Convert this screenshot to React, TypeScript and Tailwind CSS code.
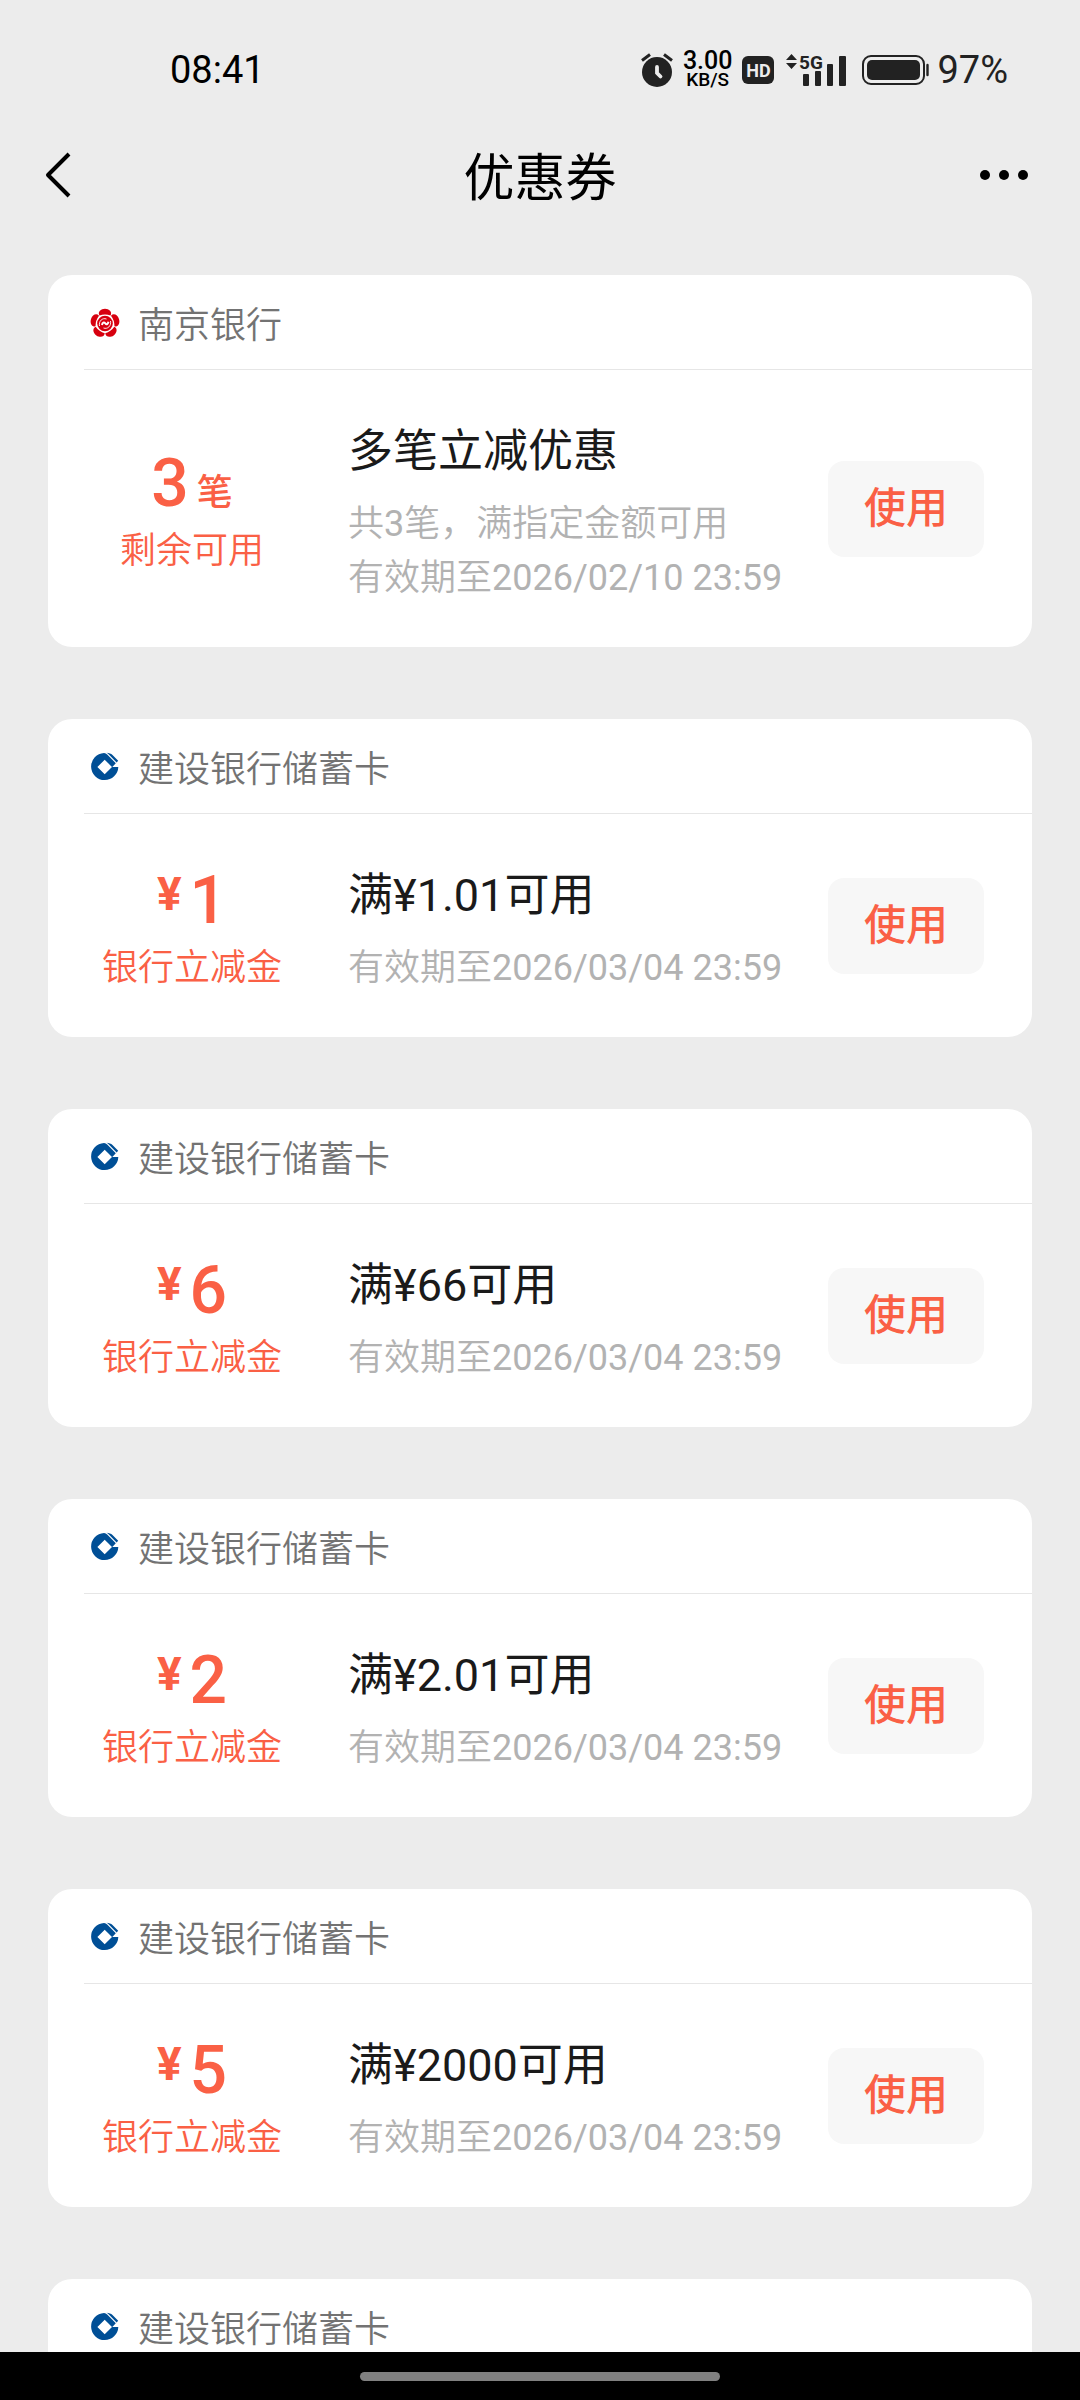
type Bank = "nanjing" | "ccb";

interface Coupon {
  id: number;
  bank: Bank;
  bankName: string;
  currency?: string;
  amount: string;
  unit?: string;
  label: string;
  title: string;
  lines: string[];
}

const coupons: Coupon[] = [
  {
    id: 1,
    bank: "nanjing",
    bankName: "南京银行",
    amount: "3",
    unit: "笔",
    label: "剩余可用",
    title: "多笔立减优惠",
    lines: ["共3笔，满指定金额可用", "有效期至2026/02/10 23:59"],
  },
  {
    id: 2,
    bank: "ccb",
    bankName: "建设银行储蓄卡",
    currency: "¥",
    amount: "1",
    label: "银行立减金",
    title: "满¥1.01可用",
    lines: ["有效期至2026/03/04 23:59"],
  },
  {
    id: 3,
    bank: "ccb",
    bankName: "建设银行储蓄卡",
    currency: "¥",
    amount: "6",
    label: "银行立减金",
    title: "满¥66可用",
    lines: ["有效期至2026/03/04 23:59"],
  },
  {
    id: 4,
    bank: "ccb",
    bankName: "建设银行储蓄卡",
    currency: "¥",
    amount: "2",
    label: "银行立减金",
    title: "满¥2.01可用",
    lines: ["有效期至2026/03/04 23:59"],
  },
  {
    id: 5,
    bank: "ccb",
    bankName: "建设银行储蓄卡",
    currency: "¥",
    amount: "5",
    label: "银行立减金",
    title: "满¥2000可用",
    lines: ["有效期至2026/03/04 23:59"],
  },
];

const AlarmIcon = () => (
  <svg width="32" height="36" viewBox="0 0 32 36" fill="none">
    <circle cx="16" cy="20" r="15" fill="#222" />
    <path d="M1 8.500 9 2.500M31 8.500 23 2.500" stroke="#222" strokeWidth="3" />
    <path d="M16 15v6l3.500 3.500" stroke="#ececec" strokeWidth="3.800" strokeLinecap="round" />
  </svg>
);

const SignalIcon = () => (
  <svg width="60" height="34" viewBox="0 0 60 34" fill="#222" className="overflow-visible">
    <path d="M0 7 5.5 1 11 7zM0 10 5.5 16 11 10z" />
    <text x="13" y="16" fontSize="19" fontWeight="700">5G</text>
    <rect x="17" y="21" width="6" height="12" rx="1" />
    <rect x="29" y="18" width="6" height="15" rx="1" />
    <rect x="41" y="11" width="6" height="22" rx="1" />
    <rect x="53" y="3" width="7" height="30" rx="1" />
  </svg>
);

const BatteryIcon = () => (
  <svg width="67" height="30" viewBox="0 0 67 30" fill="none">
    <rect x="1" y="1" width="61" height="28" rx="8" stroke="#222" strokeWidth="2" />
    <rect x="5" y="5" width="53" height="20" rx="5" fill="#222" />
    <path d="M65.5 10v10" stroke="#222" strokeWidth="2.4" strokeLinecap="round" />
  </svg>
);

const NanjingLogo = () => (
  <svg width="30" height="30" viewBox="0 0 30 30" fill="none">
    {[0, 72, 144, 216, 288].map((angle) => (
      <path
        key={angle}
        transform={`rotate(${angle} 15 15.5)`}
        d="M9.4 7.4C7.4 3.8 11 .8 15 .8s7.6 3 5.6 6.600Q15 5.400 9.400 7.400z"
        fill="#d7000f"
      />
    ))}
    <circle cx="15" cy="15.5" r="7.8" fill="#d7000f" />
    <path d="M9.500 18c-1-5 3-8.500 7-7M20.500 13c1 5-3 8.500-7 7" stroke="#fff" strokeWidth="0.9" />
    <path d="M12 17c.5-2.500 2-3.200 3.300-1.600s2.700.6 3.200-1.600" stroke="#fff" strokeWidth="2" />
  </svg>
);

const CcbLogo = () => (
  <svg width="30" height="30" viewBox="0 0 30 30" fill="#004f96">
    <path
      fillRule="evenodd"
      d="M14 .9Q16 1 17.2 2.4L25.8 11.2 22.3 15H28.3A13.6 13.6 0 1 1 14 .9zM14.7 7.700 7.400 15 14.700 22.300 22 15z"
    />
    <path d="M16.5 .8C19 .8 21 1.8 22.5 3L28.2 8.8 26.6 10.4 18.8 2.4Q18 1.4 16.5 .8z" />
  </svg>
);

const StatusBar = () => (
  <div className="flex h-[140px] shrink-0 items-center pr-[72px] pl-[170px] text-[38px] text-[#222]">
    <span className="flex-1 text-black">08:41</span>
    <AlarmIcon />
    <div className="mx-[10px] flex flex-col items-center font-medium text-black">
      <span className="text-[25px] leading-[20px]">3.00</span>
      <span className="text-[19px] leading-[18px]">KB/S</span>
    </div>
    <span className="flex h-7 w-8 items-center justify-center rounded-md bg-[#222] text-[18px] font-bold text-[#ececec]">
      HD
    </span>
    <div className="mr-4 ml-3">
      <SignalIcon />
    </div>
    <BatteryIcon />
    <span className="ml-2">97%</span>
  </div>
);

const NavBar = () => (
  <header className="flex h-[70px] shrink-0 items-center justify-between pr-[52px] pl-11 text-black">
    <button type="button" aria-label="返回" className="w-12">
      <svg width="28" height="48" viewBox="0 0 28 48" fill="none">
        <path d="M25 3 4 24 25 45" stroke="currentColor" strokeWidth="4" strokeLinejoin="round" />
      </svg>
    </button>
    <h1 className="pt-2 pl-2 text-[51px]">优惠券</h1>
    <button type="button" aria-label="更多" className="w-12">
      <svg width="48" height="10" viewBox="0 0 48 10" fill="currentColor">
        <circle cx="5" cy="5" r="5" />
        <circle cx="24" cy="5" r="5" />
        <circle cx="43" cy="5" r="5" />
      </svg>
    </button>
  </header>
);

const CouponHeader = ({ bank, name }: { bank: Bank; name: string }) => (
  <div className="flex h-[95px] items-center gap-[18px] border-b border-[#e6e6e6] pt-[2px] pl-[6px]">
    {bank === "nanjing" ? <NanjingLogo /> : <CcbLogo />}
    <span className="pt-[6px] text-[36px] font-[350] text-[#737373]">{name}</span>
  </div>
);

const CouponCard = ({ coupon }: { coupon: Coupon }) => (
  <article className="shrink-0 rounded-3xl bg-white pl-9">
    <CouponHeader bank={coupon.bank} name={coupon.bankName} />

    <div className="flex items-center py-[42px] pr-12">
      <div className="w-[216px] pt-1 text-center text-[#fa6045]">
        <div className="flex h-20 justify-center gap-2 leading-[80px] font-medium">
          {coupon.currency && (
            <span className="text-[46px] leading-[66px] font-bold">{coupon.currency}</span>
          )}
          <span className="text-[66px]">{coupon.amount}</span>
          {coupon.unit && <span className="text-[36px] leading-[98px]">{coupon.unit}</span>}
        </div>
        <p className="text-[36px] leading-[54px] font-[350]">{coupon.label}</p>
      </div>

      <div className="ml-12 flex-1 pt-2">
        <h2 className="mb-[14px] text-[45px] leading-[63px] text-[#1a1a1a]">{coupon.title}</h2>
        {coupon.lines.map((line) => (
          <p
            key={line}
            className="font-['Roboto','Noto_Sans_CJK_SC_DemiLight','Noto_Sans_CJK_SC',sans-serif] text-[36px] leading-[54px] text-[#b2b2b2]"
          >
            {line}
          </p>
        ))}
      </div>

      <button
        type="button"
        className="h-24 w-[156px] shrink-0 rounded-2xl bg-[#f7f7f7] text-[42px] font-medium text-[#fa6045]"
      >
        使用
      </button>
    </div>
  </article>
);

const App = () => {
  return (
    <div className="flex h-screen flex-col bg-[#ececec] font-['Roboto','Noto_Sans_CJK_SC',sans-serif]">
      <StatusBar />
      <NavBar />

      {/* coupon list */}
      <main className="flex flex-1 flex-col gap-[72px] overflow-hidden px-12 pt-[65px]">
        {coupons.map((coupon) => (
          <CouponCard key={coupon.id} coupon={coupon} />
        ))}
        {/* next card, only its header is in view */}
        <article className="flex-1 rounded-t-3xl bg-white pl-9">
          <CouponHeader bank="ccb" name="建设银行储蓄卡" />
        </article>
      </main>

      {/* gesture bar */}
      <div className="flex h-12 shrink-0 items-center justify-center bg-black">
        <div className="h-[9px] w-1/3 rounded-full bg-[#808080]" />
      </div>
    </div>
  );
};

export default App;
